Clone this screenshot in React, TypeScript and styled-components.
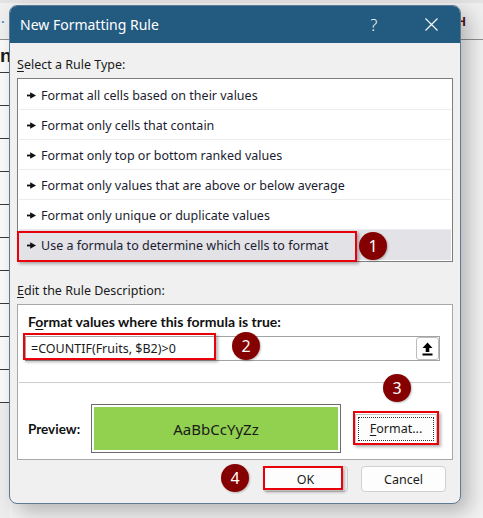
import React from "react";
import styled, { createGlobalStyle } from "styled-components";

const GlobalStyle = createGlobalStyle`
  html, body { margin: 0; padding: 0; }
  body {
    width: 483px;
    height: 518px;
    overflow: hidden;
    font-family: "Noto Sans", "Open Sans", sans-serif;
    color: #1a1a1a;
  }
`;

const Page = styled.div`
  position: relative;
  width: 483px;
  height: 518px;
  overflow: hidden;
  background: #ededed;
  display: flex;
  flex-direction: column;
`;

const SheetHeader = styled.div`
  flex: none;
  height: 36px;
  background: #efefef;
  border-top: 3px solid #e3e3e3;
  border-bottom: 1px solid #8e8e8e;
  display: flex;
  justify-content: space-between;
  align-items: center;
  padding: 0 17px 0 1px;
`;

const HeaderMark = styled.span<{ $color: string }>`
  font-family: "Liberation Sans", sans-serif;
  font-size: 13px;
  font-weight: bold;
  color: ${(p) => p.$color};
`;

const SheetBody = styled.div`
  flex: 1;
  display: flex;
`;

const SheetColumn = styled.div`
  width: 9px;
  flex: none;
  display: flex;
  flex-direction: column;
  overflow: hidden;
`;

const SheetRow = styled.div`
  height: 32px;
  flex: none;
  background: #fafafa;
  border-bottom: 1px solid #3a3a3a;
  font-family: "Liberation Sans", sans-serif;
  font-weight: bold;
  font-size: 19px;
  line-height: 32px;
  white-space: nowrap;
`;

const SheetRest = styled.div`
  flex: 1;
  background: #f2f2f2;
`;

const Dialog = styled.div`
  position: absolute;
  left: 9px;
  top: 5px;
  width: 452px;
  height: 499px;
  box-sizing: border-box;
  border: 1px solid #5d7b96;
  border-radius: 8px;
  background: #f0f0f0;
  overflow: hidden;
  display: flex;
  flex-direction: column;
  box-shadow: 8px 8px 20px rgba(0, 0, 0, 0.25);
`;

const TitleBar = styled.div`
  flex: none;
  height: 37px;
  background: #235a80;
  color: #ffffff;
  display: flex;
  align-items: center;
  padding: 0 6px 0 10px;
`;

const TitleText = styled.div`
  font-size: 14px;
  flex: 1;
`;

const TitleButton = styled.div`
  width: 46px;
  height: 37px;
  display: flex;
  align-items: center;
  justify-content: center;
  font-size: 16px;
  font-weight: 300;
  margin-left: 11px;
`;

const Body = styled.div`
  flex: 1;
  display: flex;
  flex-direction: column;
  padding: 0 7px;
`;

const SectionLabel = styled.div<{ $top: number }>`
  margin-top: ${(p) => p.$top}px;
  height: 18px;
  line-height: 18px;
  font-size: 12.5px;
  color: #1a1a1a;
`;

const Key = styled.span`
  text-decoration: underline;
  text-underline-offset: 2px;
`;

const ListBox = styled.div`
  margin-top: 4px;
  height: 184px;
  box-sizing: border-box;
  border: 1px solid #7d7d7d;
  background: #ffffff;
  padding: 1px;
  display: flex;
  flex-direction: column;
`;

const ListItem = styled.div<{ $selected?: boolean }>`
  height: 30px;
  box-sizing: border-box;
  display: flex;
  align-items: center;
  gap: 5px;
  padding: 1px 0 0 8px;
  font-size: 12.5px;
  color: #1c1c30;
  background: ${(p) => (p.$selected ? "#e2e2e7" : "transparent")};
  border-bottom: 1px solid ${(p) => (p.$selected ? "transparent" : "#ececec")};
`;

const DescBox = styled.div`
  margin-top: 4px;
  height: 156px;
  box-sizing: border-box;
  border: 1px solid #a8a8a8;
  background: #ffffff;
  display: flex;
  flex-direction: column;
`;

const DescHeading = styled.div`
  padding: 8px 0 0 10px;
  height: 18px;
  line-height: 18px;
  font-family: Lato, "Noto Sans", sans-serif;
  font-size: 14px;
  font-weight: bold;
  color: #111;
`;

const FormulaField = styled.div`
  margin: 5px 12px 0 7px;
  height: 25px;
  box-sizing: border-box;
  border: 1px solid #a3a3a3;
  display: flex;
  align-items: center;
`;

const FormulaText = styled.div`
  flex: 1;
  padding-left: 5px;
  font-size: 12.5px;
  color: #1a1a1a;
`;

const CollapseButton = styled.div`
  width: 23px;
  height: 23px;
  box-sizing: border-box;
  border: 1px solid #bdbdbd;
  border-radius: 3px;
  background: #fff;
  display: flex;
  align-items: center;
  justify-content: center;
`;

const Separator = styled.div`
  margin: 21px 1px 0;
  height: 1px;
  background: #cdcdcd;
`;

const PreviewRow = styled.div`
  display: flex;
  align-items: center;
  padding: 21px 0 0 10px;
`;

const PreviewLabel = styled.div`
  width: 63px;
  font-family: Lato, "Noto Sans", sans-serif;
  font-size: 13.5px;
  font-weight: bold;
  color: #111;
`;

const PreviewFrame = styled.div`
  width: 250px;
  height: 49px;
  box-sizing: border-box;
  border: 1px solid #6b6b6b;
  padding: 2px;
  background: #fff;
  display: flex;
`;

const PreviewSwatch = styled.div`
  flex: 1;
  background: #92d050;
  display: flex;
  align-items: center;
  justify-content: center;
  font-size: 15px;
  color: #1a1a1a;
`;

const FormatButton = styled.div`
  margin-left: 14px;
  width: 82px;
  height: 30px;
  box-sizing: border-box;
  border: 1px solid #c6c6c6;
  border-bottom-color: #3f78bd;
  background: #fdfdfd;
  padding: 2px;
  display: flex;
`;

const FocusRect = styled.div`
  flex: 1;
  border: 1px dotted #333;
  display: flex;
  align-items: center;
  justify-content: center;
  font-size: 12.5px;
`;

const ButtonRow = styled.div`
  margin-top: 6px;
  display: flex;
  justify-content: flex-end;
  gap: 13px;
  padding-right: 7px;
`;

const DialogButton = styled.div`
  width: 85px;
  height: 26px;
  box-sizing: border-box;
  border: 1px solid #d0d0d0;
  border-radius: 4px;
  background: #fdfdfd;
  display: flex;
  align-items: center;
  justify-content: center;
  font-size: 12.5px;
`;

const Highlight = styled.div<{ $l: number; $t: number; $w: number; $h: number }>`
  position: absolute;
  left: ${(p) => p.$l}px;
  top: ${(p) => p.$t}px;
  width: ${(p) => p.$w}px;
  height: ${(p) => p.$h}px;
  box-sizing: border-box;
  border: 2px solid #e8000b;
  box-shadow: 2px 2px 3px rgba(0, 0, 0, 0.3);
  pointer-events: none;
`;

const Badge = styled.div<{ $x: number; $y: number }>`
  position: absolute;
  left: ${(p) => p.$x - 14}px;
  top: ${(p) => p.$y - 14}px;
  width: 28px;
  height: 28px;
  border-radius: 50%;
  background: #850000;
  color: #fff;
  display: flex;
  align-items: center;
  justify-content: center;
  font-size: 16px;
  box-shadow: 1px 1px 2px rgba(0, 0, 0, 0.25);
`;

const Pointer = () => (
  <svg width="9" height="7" viewBox="0 0 9 7">
    <rect x="0" y="2.6" width="4" height="1.8" fill="#111" />
    <path d="M3.2 0.3 L9 3.5 L3.2 6.7 Z" fill="#111" />
  </svg>
);

const CloseIcon = () => (
  <svg width="13" height="13" viewBox="0 0 13 13">
    <path d="M0.5 0.5 L12.5 12.5 M12.5 0.5 L0.5 12.5" stroke="#fff" strokeWidth="1.1" />
  </svg>
);

const UploadIcon = () => (
  <svg width="11" height="14" viewBox="0 0 11 14">
    <path d="M5.5 0.5 L10.5 6 L7.3 6 L7.3 10 L3.7 10 L3.7 6 L0.5 6 Z" fill="#000" />
    <rect x="0.5" y="11.5" width="10" height="2" fill="#000" />
  </svg>
);

const rules = [
  "Format all cells based on their values",
  "Format only cells that contain",
  "Format only top or bottom ranked values",
  "Format only values that are above or below average",
  "Format only unique or duplicate values",
  "Use a formula to determine which cells to format",
];

export default function App() {
  return (
    <>
      <GlobalStyle />
      <Page>
        <SheetHeader>
          <HeaderMark $color="#4a8fd0">·</HeaderMark>
          <HeaderMark $color="#5a1414">H</HeaderMark>
        </SheetHeader>
        <SheetBody>
          <SheetColumn>
            {Array.from({ length: 11 }).map((_, i) => (
              <SheetRow key={i}>{i === 0 ? "n" : ""}</SheetRow>
            ))}
          </SheetColumn>
          <SheetRest />
        </SheetBody>

        <Dialog>
          <TitleBar>
            <TitleText>New Formatting Rule</TitleText>
            <TitleButton>?</TitleButton>
            <TitleButton>
              <CloseIcon />
            </TitleButton>
          </TitleBar>
          <Body>
            <SectionLabel $top={13}>
              <Key>S</Key>elect a Rule Type:
            </SectionLabel>
            <ListBox>
              {rules.map((r, i) => (
                <ListItem key={r} $selected={i === rules.length - 1}>
                  <Pointer />
                  {r}
                </ListItem>
              ))}
            </ListBox>
            <SectionLabel $top={20}>
              <Key>E</Key>dit the Rule Description:
            </SectionLabel>
            <DescBox>
              <DescHeading>
                F<Key>o</Key>rmat values where this formula is true:
              </DescHeading>
              <FormulaField>
                <FormulaText>=COUNTIF(Fruits, $B2)&gt;0</FormulaText>
                <CollapseButton>
                  <UploadIcon />
                </CollapseButton>
              </FormulaField>
              <Separator />
              <PreviewRow>
                <PreviewLabel>Preview:</PreviewLabel>
                <PreviewFrame>
                  <PreviewSwatch>AaBbCcYyZz</PreviewSwatch>
                </PreviewFrame>
                <FormatButton>
                  <FocusRect>
                    <Key>F</Key>ormat...
                  </FocusRect>
                </FormatButton>
              </PreviewRow>
            </DescBox>
            <ButtonRow>
              <DialogButton>OK</DialogButton>
              <DialogButton>Cancel</DialogButton>
            </ButtonRow>
          </Body>
        </Dialog>

        <Highlight $l={17} $t={231} $w={340} $h={31} />
        <Highlight $l={23} $t={333} $w={193} $h={27} />
        <Highlight $l={353} $t={411} $w={86} $h={34} />
        <Highlight $l={263} $t={466} $w={80} $h={24} />
        <Badge $x={373} $y={246}>1</Badge>
        <Badge $x={246} $y={346}>2</Badge>
        <Badge $x={397} $y={388}>3</Badge>
        <Badge $x={235} $y={478}>4</Badge>
      </Page>
    </>
  );
}
